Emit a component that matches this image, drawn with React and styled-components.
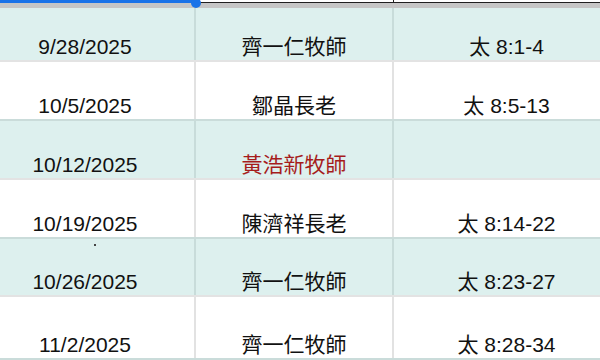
import React from "react";
import styled, { createGlobalStyle } from "styled-components";

const Global = createGlobalStyle`
  html, body { margin: 0; padding: 0; background: #ffffff; overflow: hidden; }
  body { font-family: "Liberation Sans", "Noto Sans CJK TC", sans-serif; }
`;

const Page = styled.div`
  position: relative;
  width: 600px;
  height: 360px;
  overflow: hidden;
  background: #ffffff;
`;

const Sheet = styled.div`
  margin-left: -24px;
  width: 645px;
  display: flex;
  flex-direction: column;
`;

const cols = "220px 198px 227px";

const HeaderEdge = styled.div`
  display: grid;
  grid-template-columns: ${cols};
  height: 3px;
`;

const EdgeCell = styled.div`
  box-sizing: border-box;
  background: ${(p) => (p.$selected ? "#1a73e8" : "#ffffff")};
  border-bottom: 1px solid ${(p) => (p.$selected ? "#1a73e8" : "#202020")};
  border-right: 1px solid ${(p) => (p.$selected ? "#1a73e8" : "#202020")};
`;

const FreezeBar = styled.div`
  height: 5px;
  background: #c6c6c6;
`;

const Handle = styled.div`
  position: absolute;
  left: 191px;
  top: -2px;
  width: 10px;
  height: 10px;
  border-radius: 50%;
  background: #1a73e8;
`;

const Row = styled.div`
  display: grid;
  grid-template-columns: ${cols};
  height: ${(p) => p.$h}px;
  box-sizing: border-box;
  background: ${(p) => (p.$band ? "#ddf0ee" : "#ffffff")};
  border-bottom: 2px solid ${(p) => (p.$band ? "#e3e3e3" : "#cadcda")};
`;

const Cell = styled.div`
  position: relative;
  box-sizing: border-box;
  display: flex;
  align-items: flex-end;
  justify-content: center;
  padding-bottom: 3px;
  border-right: 2px solid ${(p) => (p.$band ? "#c8dcda" : "#e2e2e2")};
  font-size: 21px;
  line-height: 21px;
  color: ${(p) => (p.$red ? "#a61c1c" : "#111111")};
  white-space: nowrap;
`;

const Speck = styled.span`
  position: absolute;
  left: 118px;
  top: 5px;
  width: 2px;
  height: 2px;
  background: #444;
`;

const rows = [
  { date: "9/28/2025", who: "齊一仁牧師", ref: "太 8:1-4", h: 54 },
  { date: "10/5/2025", who: "鄒晶長老", ref: "太 8:5-13", h: 59 },
  { date: "10/12/2025", who: "黃浩新牧師", ref: "", h: 59, red: true },
  { date: "10/19/2025", who: "陳濟祥長老", ref: "太 8:14-22", h: 59 },
  { date: "10/26/2025", who: "齊一仁牧師", ref: "太 8:23-27", h: 58, speck: true },
  { date: "11/2/2025", who: "齊一仁牧師", ref: "太 8:28-34", h: 63 },
];

export default function App() {
  return (
    <Page>
      <Global />
      <Sheet>
        <HeaderEdge>
          <EdgeCell $selected />
          <EdgeCell />
          <EdgeCell />
        </HeaderEdge>
        <FreezeBar />
        {rows.map((r, i) => {
          const band = i % 2 === 0;
          return (
            <Row key={r.date} $band={band} $h={r.h}>
              <Cell $band={band}>
                {r.speck && <Speck />}
                {r.date}
              </Cell>
              <Cell $band={band} $red={r.red}>
                {r.who}
              </Cell>
              <Cell $band={band}>{r.ref}</Cell>
            </Row>
          );
        })}
      </Sheet>
      <Handle />
    </Page>
  );
}
